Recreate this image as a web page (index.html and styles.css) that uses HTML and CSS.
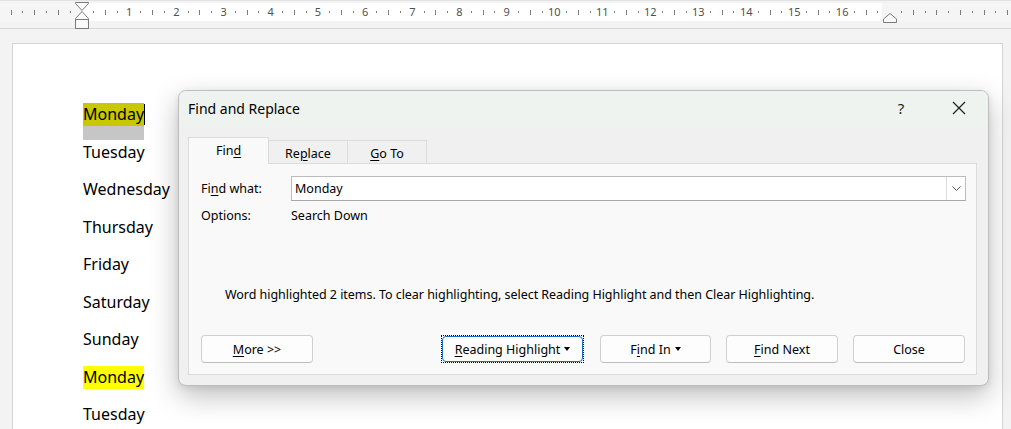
FILE: index.html
```html
<!DOCTYPE html>
<html lang="en">
<head>
    <meta charset="UTF-8">
    <title>Find and Replace</title>
    <link rel="stylesheet" href="styles.css">
</head>
<body>
    <div class="ruler">
        <div class="ruler-band">
            <div class="ticks">
                <span class="tk l"></span><span class="tk d"></span><span class="tk l"></span><span class="tk d"></span><span class="tk l"></span><span class="tk d"></span>
                <span class="tk marker">
                    <svg class="indent-left" width="14" height="27" viewBox="0 0 14 27">
                        <polygon points="0.5,0.5 13.5,0.5 13.5,1.5 7,8.5 0.5,1.5" fill="#fafafa" stroke="#7a7a7a"/>
                        <polygon points="7,9.5 13.5,16.5 13.5,17.5 0.5,17.5 0.5,16.5" fill="#fafafa" stroke="#7a7a7a"/>
                        <rect x="0.5" y="17.5" width="13" height="9" fill="#fafafa" stroke="#7a7a7a"/>
                    </svg>
                </span>
                <span class="tk d"></span><span class="tk l"></span><span class="tk d"></span><span class="tk n">1</span>
                <span class="tk d"></span><span class="tk l"></span><span class="tk d"></span><span class="tk n">2</span>
                <span class="tk d"></span><span class="tk l"></span><span class="tk d"></span><span class="tk n">3</span>
                <span class="tk d"></span><span class="tk l"></span><span class="tk d"></span><span class="tk n">4</span>
                <span class="tk d"></span><span class="tk l"></span><span class="tk d"></span><span class="tk n">5</span>
                <span class="tk d"></span><span class="tk l"></span><span class="tk d"></span><span class="tk n">6</span>
                <span class="tk d"></span><span class="tk l"></span><span class="tk d"></span><span class="tk n">7</span>
                <span class="tk d"></span><span class="tk l"></span><span class="tk d"></span><span class="tk n">8</span>
                <span class="tk d"></span><span class="tk l"></span><span class="tk d"></span><span class="tk n">9</span>
                <span class="tk d"></span><span class="tk l"></span><span class="tk d"></span><span class="tk n">10</span>
                <span class="tk d"></span><span class="tk l"></span><span class="tk d"></span><span class="tk n">11</span>
                <span class="tk d"></span><span class="tk l"></span><span class="tk d"></span><span class="tk n">12</span>
                <span class="tk d"></span><span class="tk l"></span><span class="tk d"></span><span class="tk n">13</span>
                <span class="tk d"></span><span class="tk l"></span><span class="tk d"></span><span class="tk n">14</span>
                <span class="tk d"></span><span class="tk l"></span><span class="tk d"></span><span class="tk n">15</span>
                <span class="tk d"></span><span class="tk l"></span><span class="tk d"></span><span class="tk n">16</span>
                <span class="tk d"></span><span class="tk l"></span><span class="tk d"></span>
                <span class="tk marker">
                    <svg class="indent-right" width="14" height="10" viewBox="0 0 14 10">
                        <polygon points="7,0.5 13.5,6 13.5,9.5 0.5,9.5 0.5,6" fill="#fafafa" stroke="#7a7a7a"/>
                    </svg>
                </span>
                <span class="tk d"></span><span class="tk l"></span><span class="tk d"></span><span class="tk l"></span><span class="tk d"></span>
                <span class="tk l"></span><span class="tk d"></span><span class="tk l"></span><span class="tk d"></span><span class="tk l"></span>
            </div>
        </div>
    </div>

    <div class="workspace">
        <div class="page">
            <p class="para"><span class="hl hl-current">Monday</span></p>
            <p class="para">Tuesday</p>
            <p class="para">Wednesday</p>
            <p class="para">Thursday</p>
            <p class="para">Friday</p>
            <p class="para">Saturday</p>
            <p class="para">Sunday</p>
            <p class="para"><span class="hl">Monday</span></p>
            <p class="para">Tuesday</p>
        </div>
    </div>

    <div class="dialog">
        <div class="dlg-title">
            <span class="dlg-caption">Find and Replace</span>
            <span class="title-btn help">?</span>
            <span class="title-btn close">
                <svg width="14" height="14" viewBox="0 0 14 14">
                    <path d="M1 1 L13 13 M13 1 L1 13" stroke="#1f1f1f" stroke-width="1.2" fill="none"/>
                </svg>
            </span>
        </div>
        <div class="dlg-body">
            <div class="tabs">
                <div class="tab active">Fin<u>d</u></div>
                <div class="tab">Re<u>p</u>lace</div>
                <div class="tab"><u>G</u>o To</div>
            </div>
            <div class="panel">
                <div class="field-row">
                    <span class="field-label">Fi<u>n</u>d what:</span>
                    <div class="combo">
                        <span class="combo-text">Monday</span>
                        <span class="combo-btn">
                            <svg width="9" height="5" viewBox="0 0 9 5">
                                <path d="M0.5 0.5 L4.5 4.5 L8.5 0.5" stroke="#555" stroke-width="1" fill="none"/>
                            </svg>
                        </span>
                    </div>
                </div>
                <div class="options-row">
                    <span class="field-label">Options:</span>
                    <span>Search Down</span>
                </div>
                <div class="message">Word highlighted 2 items. To clear highlighting, select Reading Highlight and then Clear Highlighting.</div>
                <div class="button-row">
                    <div class="btn"><u>M</u>ore &gt;&gt;</div>
                    <div class="spacer"></div>
                    <div class="btn btn-focus"><div class="btn-inner"><u>R</u>eading Highlight<span class="caret"></span></div></div>
                    <div class="btn btn-narrow">F<u>i</u>nd In<span class="caret"></span></div>
                    <div class="btn"><u>F</u>ind Next</div>
                    <div class="btn">Close</div>
                </div>
            </div>
        </div>
    </div>
</body>
</html>
```

FILE: styles.css
```css
body {
    margin: 0;
    height: 429px;
    background-color: #f3f3f3;
    font-family: "Noto Sans", sans-serif;
    overflow: hidden;
}

/* ruler */
.ruler {
    box-sizing: border-box;
    height: 29px;
    padding-top: 3px;
    border-top: 1px solid #e3e3e3;
    border-bottom: 1px solid #d6d6d6;
    background-color: #f3f3f3;
}
.ruler-band {
    height: 18px;
    margin-top: -1px;
    background: linear-gradient(to right, #f5f5f5 82px, #ffffff 82px, #ffffff 882px, #f5f5f5 882px);
}
.ticks {
    display: flex;
    height: 18px;
    margin-left: 5.3px;
}
.tk {
    flex: 0 0 11.8px;
    display: flex;
    justify-content: center;
    align-items: center;
    position: relative;
    white-space: nowrap;
}
.tk.l::before {
    content: "";
    width: 1px;
    height: 5px;
    background-color: #7d7d7d;
}
.tk.d::before {
    content: "";
    width: 1px;
    height: 2px;
    background-color: #7d7d7d;
}
.tk.n {
    font-size: 11px;
    color: #505050;
    line-height: 18px;
}
.indent-left {
    position: absolute;
    left: -1px;
    top: -1px;
}
.indent-right {
    position: absolute;
    left: -1px;
    top: 10px;
}

/* document */
.workspace {
    padding: 14px 8px 0 12px;
}
.page {
    box-sizing: border-box;
    height: 386px;
    overflow: hidden;
    background-color: #ffffff;
    border: 1px solid #d4d4d4;
    border-bottom: none;
    padding: 59px 0 0 70px;
    font-size: 16px;
    color: #000;
}
.para {
    margin: 0 0 14.5px 0;
    line-height: 23px;
    height: 23px;
}
.hl {
    display: inline-block;
    background-color: #ffff00;
    position: relative;
}
.hl-current {
    background-color: #c8c800;
    box-shadow: 0 14px 0 #c6c6c6;
}
.hl-current::after {
    content: "";
    position: absolute;
    right: -1px;
    top: 1px;
    width: 1px;
    height: 21px;
    background-color: #000;
}

/* dialog */
.dialog {
    position: absolute;
    left: 178px;
    top: 90px;
    width: 811px;
    height: 296px;
    box-sizing: border-box;
    border: 1px solid #bdbdbd;
    border-radius: 8px;
    background-color: #f0f0f0;
    box-shadow: 0 10px 28px rgba(0, 0, 0, 0.26), 0 2px 6px rgba(0, 0, 0, 0.08);
    display: flex;
    flex-direction: column;
    overflow: hidden;
    font-size: 12.5px;
    color: #000;
}
.dlg-title {
    height: 36px;
    box-sizing: border-box;
    padding: 0 0 2px 9px;
    display: flex;
    align-items: center;
    background-color: #eff3ef;
}
.dlg-caption {
    flex: 1;
    font-size: 14px;
    color: #000;
}
.title-btn {
    width: 58px;
    height: 34px;
    display: flex;
    justify-content: center;
    align-items: center;
}
.help {
    font-size: 15px;
    color: #222;
}
.dlg-body {
    flex: 1;
    display: flex;
    flex-direction: column;
    padding: 10px 11px 10px 9px;
}
.tabs {
    display: flex;
    align-items: flex-end;
    height: 26px;
}
.tab {
    width: 80px;
    height: 23px;
    box-sizing: border-box;
    border: 1px solid #dcdcdc;
    border-bottom: none;
    margin-left: -1px;
    display: flex;
    justify-content: center;
    align-items: center;
    padding-top: 2px;
    background-color: #f0f0f0;
}
.tab.active {
    width: 81px;
    height: 27px;
    margin-left: 0;
    margin-bottom: -1px;
    background-color: #f9f9f9;
    position: relative;
    padding-top: 0;
    padding-bottom: 2px;
}
.panel {
    flex: 1;
    display: flex;
    flex-direction: column;
    border: 1px solid #dcdcdc;
    background-color: #f9f9f9;
    padding: 0 11px 11px 12px;
}
.field-row {
    display: flex;
    align-items: center;
    margin-top: 12px;
    height: 25px;
}
.field-label {
    width: 90px;
    flex: 0 0 90px;
}
.combo {
    flex: 1;
    height: 25px;
    box-sizing: border-box;
    border: 1px solid #bcbcbc;
    border-bottom-color: #a8a8a8;
    background-color: #ffffff;
    display: flex;
    align-items: center;
    margin-right: -1px;
}
.combo-text {
    flex: 1;
    padding-left: 3px;
}
.combo-btn {
    width: 19px;
    height: 23px;
    box-sizing: border-box;
    border-left: 1px solid #dadada;
    display: flex;
    justify-content: center;
    align-items: center;
}
.options-row {
    display: flex;
    align-items: center;
    margin-top: 4px;
    height: 20px;
}
.message {
    margin-top: 60px;
    height: 20px;
    line-height: 20px;
    padding-left: 24px;
    letter-spacing: -0.04px;
}
.button-row {
    display: flex;
    margin-top: 30px;
    height: 28px;
}
.spacer {
    flex: 1;
}
.btn {
    width: 112px;
    height: 28px;
    box-sizing: border-box;
    border: 1px solid #d0d0d0;
    border-bottom-color: #bdbdbd;
    border-radius: 4px;
    background-color: #fdfdfd;
    display: flex;
    justify-content: center;
    align-items: center;
    margin-left: 15px;
}
.btn:first-child {
    margin-left: 0;
}
.btn-narrow {
    width: 111px;
}
.btn-focus {
    width: 143px;
    margin-left: 0;
    margin-right: 1px;
    border: 1px dotted #000;
    border-radius: 0;
    padding: 0;
    background-color: transparent;
}
.btn-inner {
    width: 100%;
    height: 100%;
    box-sizing: border-box;
    border: 1px solid #1a6fc9;
    border-radius: 4px;
    background-color: #fdfdfd;
    display: flex;
    justify-content: center;
    align-items: center;
}
.caret {
    display: inline-block;
    width: 0;
    height: 0;
    border-left: 3.5px solid transparent;
    border-right: 3.5px solid transparent;
    border-top: 4px solid #000;
    margin-left: 4px;
}
u {
    text-underline-offset: 2px;
}
```
